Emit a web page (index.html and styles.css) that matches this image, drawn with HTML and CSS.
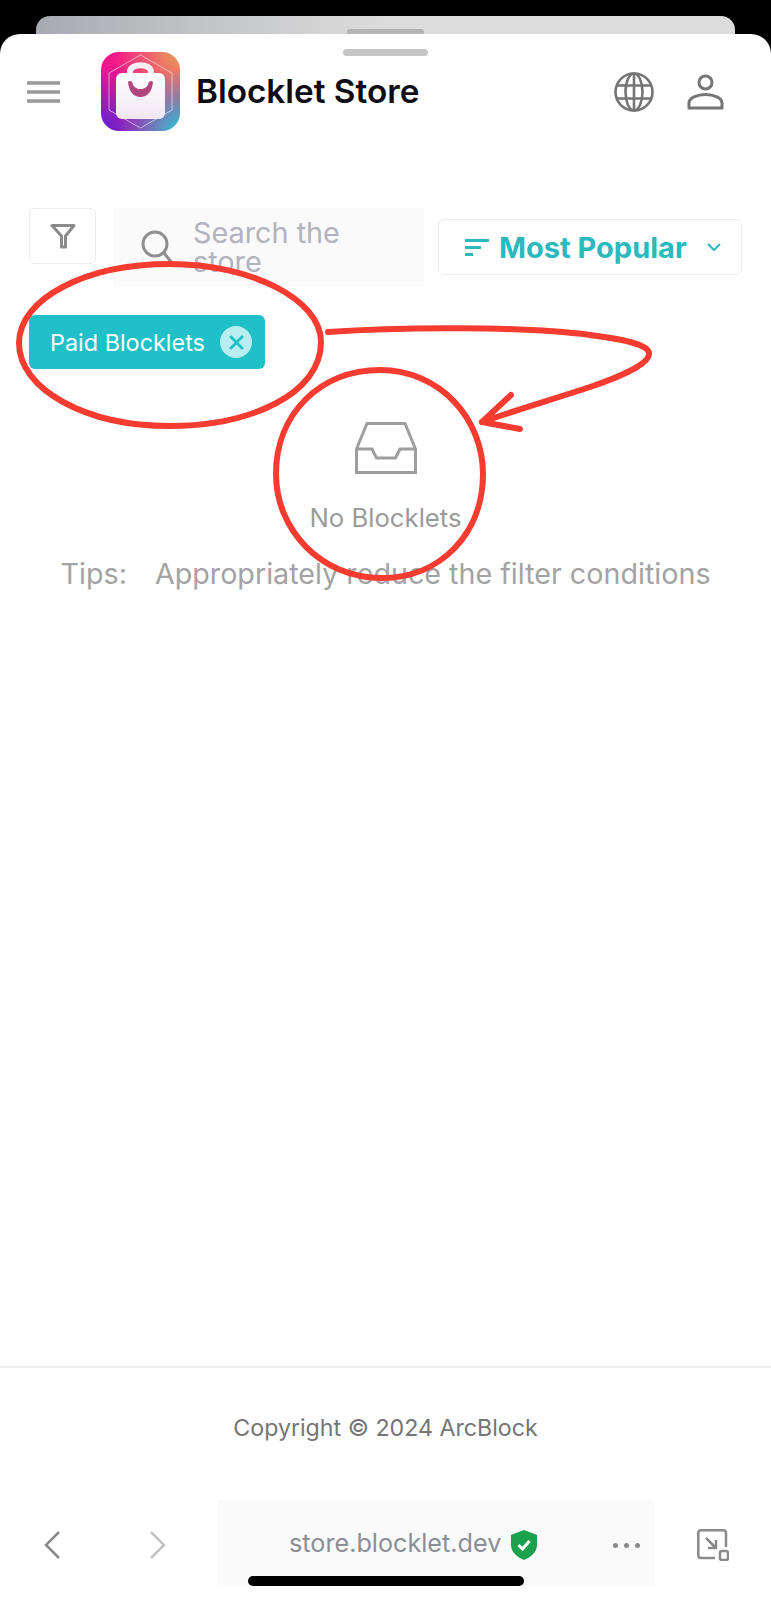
FILE: index.html
```html
<!DOCTYPE html>
<html lang="en">
<head>
  <meta charset="UTF-8">
  <title>Blocklet Store</title>
  <link rel="stylesheet" href="styles.css">
</head>
<body>
  <div class="top-strip">
    <div class="back-sheet"><span class="back-grabber"></span></div>
  </div>

  <div class="sheet">
    <span class="grabber"></span>

    <header class="header">
      <svg class="hamburger" viewBox="0 0 33 22">
        <path d="M0 2H33M0 11H33M0 20H33" stroke="#999" stroke-width="3.5" fill="none"/>
      </svg>
      <div class="logo">
        <svg viewBox="0 0 79 79">
          <defs>
            <linearGradient id="bagFill" x1="0" y1="0" x2="0" y2="1">
              <stop offset="0" stop-color="#fff"/>
              <stop offset="1" stop-color="#f1e6f3"/>
            </linearGradient>
          </defs>
          <path d="M39.5 3 71 21V58L39.5 76 8 58V21Z" fill="none" stroke="#fff" stroke-opacity=".55" stroke-width="1"/>
          <path d="M29 24V20C29 11 50 11 50 20V24" fill="none" stroke="#f6eef5" stroke-width="6"/>
          <rect x="15" y="21" width="49" height="46" rx="6" fill="url(#bagFill)"/>
          <path d="M27 30C28 28 31 29 31.5 31 33 39 46 39 47.5 31 48 29 51 28 52 30 51 40 46 45 39.5 45S28 40 27 30Z" fill="#b0487f"/>
        </svg>
      </div>
      <h1 class="title">Blocklet Store</h1>
      <div class="header-actions">
        <svg class="globe" viewBox="0 0 40 40" fill="none" stroke="#757575" stroke-width="2.6">
          <circle cx="20" cy="20" r="18.5"/>
          <ellipse cx="20" cy="20" rx="8.5" ry="18.5"/>
          <path d="M3 13.5H37M3 26.5H37M20 1.5V38.5"/>
        </svg>
        <svg class="user" viewBox="0 0 37 36" fill="none" stroke="#757575" stroke-width="3">
          <circle cx="18.5" cy="8.5" r="6.5"/>
          <path d="M2 34V29C2 24 10 20.5 18.5 20.5S35 24 35 29V34Z" stroke-linejoin="round"/>
        </svg>
      </div>
    </header>

    <div class="toolbar">
      <button class="filter-btn">
        <svg viewBox="0 0 26 26" width="26" height="26" fill="none" stroke="#8a8a8a" stroke-width="3" stroke-linejoin="round">
          <path d="M2 2.5H24L15.5 13V24H11.5V13Z"/>
        </svg>
      </button>
      <div class="search">
        <svg class="search-icon" viewBox="0 0 32 34" fill="none" stroke="#8f8f8f" stroke-width="3">
          <circle cx="14" cy="14" r="12"/>
          <path d="M23 23 31 33"/>
        </svg>
        <div class="search-text">Search the store</div>
      </div>
      <button class="sort-btn">
        <svg class="sort-icon" viewBox="0 0 24 17" fill="none" stroke="#2ab9bd" stroke-width="3">
          <path d="M0 1.5H24M0 8.5H16M0 15.5H8"/>
        </svg>
        <span class="sort-label">Most Popular</span>
        <svg class="chevron" viewBox="0 0 14 8" fill="none" stroke="#2ab9bd" stroke-width="2">
          <path d="M1 1 7 7 13 1"/>
        </svg>
      </button>
    </div>

    <div class="chips">
      <div class="chip">
        <span>Paid Blocklets</span>
        <span class="chip-close">
          <svg viewBox="0 0 14 14" width="15" height="15" fill="none" stroke="#1fc0c7" stroke-width="2.6">
            <path d="M1 1 13 13M13 1 1 13"/>
          </svg>
        </span>
      </div>
    </div>

    <div class="empty">
      <svg class="inbox" viewBox="0 0 62 52" fill="none" stroke="#9e9e9e" stroke-width="3">
        <path d="M1.5 27 12 1.5H50L60.5 27V50.5H1.5Z"/>
        <path d="M1.5 27H17L21.5 36H40.5L45 27H60.5"/>
      </svg>
      <div class="empty-title">No Blocklets</div>
      <div class="tips"><span>Tips:</span><span>Appropriately reduce the filter conditions</span></div>
    </div>

    <footer class="footer">Copyright © 2024 ArcBlock</footer>

    <nav class="browser-bar">
      <svg class="nav-arrow" viewBox="0 0 16 28" fill="none" stroke="#8a8a8a" stroke-width="2.5">
        <path d="M15 1 2 14 15 27"/>
      </svg>
      <svg class="nav-arrow forward" viewBox="0 0 16 28" fill="none" stroke="#c4c4c4" stroke-width="2.5">
        <path d="M1 1 14 14 1 27"/>
      </svg>
      <div class="url-box">
        <span class="url">store.blocklet.dev</span>
        <svg class="shield" viewBox="0 0 26 30">
          <path d="M13 0 26 5V15C26 22 20 27 13 30 6 27 0 22 0 15V5Z" fill="#1ba04b"/>
          <path d="M7.5 15 11.5 19 18.5 11" fill="none" stroke="#fff" stroke-width="3"/>
        </svg>
        <span class="dots"><i></i><i></i><i></i></span>
      </div>
      <svg class="exit-icon" viewBox="0 0 32 32" fill="none" stroke="#8a8a8a" stroke-width="2.5">
        <path d="M18 29H4C2 29 1.3 28 1.3 26V4C1.3 2 2 1.3 4 1.3H26C28 1.3 29 2 29 4V18"/>
        <path d="M9 9 19 19M19 11V19H11"/>
        <rect x="23" y="22" width="8" height="9" rx="2"/>
      </svg>
    </nav>

    <span class="home-indicator"></span>

    <!-- red pen notes drawn over the screenshot -->
    <svg class="notes" viewBox="0 0 771 1566" fill="none" stroke="#f63c30" stroke-width="6" stroke-linecap="round" stroke-linejoin="round">
      <path d="M321 308C321 360 250 392 170 392 85 392 19 355 19 309 19 265 85 230 170 230 250 230 321 265 321 308Z"/>
      <path d="M328 298C400 293 520 292 590 301 630 306 650 312 649 320 649 330 620 343 590 353S510 378 482 388"/>
      <path d="M511 361 482 388 520 395"/>
      <path d="M380 336C440 336 483 385 483 440 483 500 440 544 382 544 320 544 276 495 276 440 276 380 320 336 380 336Z"/>
    </svg>
  </div>
</body>
</html>
```

FILE: styles.css
```css
* {
  box-sizing: border-box;
}

html, body {
  margin: 0;
  height: 1600px;
}

body {
  background-color: #000;
  font-family: Inter, "Noto Sans", sans-serif;
  display: flex;
  flex-direction: column;
  overflow: hidden;
}

.top-strip {
  height: 34px;
  padding: 16px 36px 0;
  flex-shrink: 0;
}

.back-sheet {
  height: 18px;
  border-radius: 14px 14px 0 0;
  background: linear-gradient(90deg, #a7abb1 0%, #c4c5c7 25%, #dcdcdc 50%, #dcdcdc 100%);
  display: flex;
  justify-content: center;
  padding-top: 13px;
}

.back-grabber {
  width: 77px;
  height: 5px;
  background-color: #b5b5b5;
  border-radius: 3px 3px 0 0;
}

.sheet {
  position: relative;
  flex: 1;
  background-color: #fff;
  border-radius: 20px 20px 0 0;
  display: flex;
  flex-direction: column;
}

.grabber {
  position: absolute;
  top: 15px;
  left: 343px;
  width: 85px;
  height: 7px;
  background-color: #c6c6c6;
  border-radius: 4px;
}

.header {
  display: flex;
  align-items: center;
  height: 79px;
  margin-top: 18px;
  padding: 0 47px 0 27px;
}

.hamburger {
  width: 33px;
  height: 22px;
  margin-right: 41px;
}

.logo {
  width: 79px;
  height: 79px;
  border-radius: 18px;
  overflow: hidden;
  background:
    radial-gradient(circle at 100% 100%, #1fc8d8 0, rgba(31, 200, 216, 0) 55%),
    radial-gradient(circle at 100% 0, #e8a255 0, rgba(232, 162, 85, 0) 60%),
    radial-gradient(circle at 0 100%, #5a22d6 0, rgba(90, 34, 214, 0) 60%),
    #f3178a;
}

.logo svg {
  display: block;
  width: 79px;
  height: 79px;
}

.title {
  margin: 0 0 2px 16px;
  font-size: 33.3px;
  font-weight: 600;
  color: #0c0c14;
}

.header-actions {
  margin-left: auto;
  display: flex;
  align-items: center;
  gap: 33px;
}

.globe {
  width: 40px;
  height: 40px;
}

.user {
  width: 37px;
  height: 36px;
}

.toolbar {
  display: flex;
  align-items: flex-start;
  margin-top: 77px;
  padding: 0 29px;
}

.filter-btn {
  width: 67px;
  height: 56px;
  background-color: #fff;
  border: 1px solid #ececec;
  border-radius: 6px;
  padding: 0;
  display: flex;
  align-items: center;
  justify-content: center;
}

.search {
  width: 311px;
  height: 78px;
  margin-left: 17px;
  padding-left: 28px;
  background-color: #fafafa;
  display: flex;
  align-items: center;
}

.search-icon {
  width: 32px;
  height: 34px;
  flex-shrink: 0;
}

.search-text {
  width: 190px;
  margin-left: 20px;
  font-size: 28.8px;
  line-height: 29px;
  color: #b3b3bd;
}

.sort-btn {
  width: 304px;
  height: 56px;
  margin: 11px 0 0 14px;
  background-color: #fff;
  border: 1px solid #ececec;
  border-radius: 6px;
  padding: 0 20px 0 26px;
  display: flex;
  align-items: center;
  font-family: inherit;
}

.sort-icon {
  width: 24px;
  height: 17px;
}

.sort-label {
  margin-left: 10px;
  font-size: 29px;
  font-weight: 700;
  color: #2ab9bd;
}

.chevron {
  width: 14px;
  height: 8px;
  margin-left: auto;
}

.chips {
  display: flex;
  margin-top: 29px;
  padding-left: 29px;
}

.chip {
  width: 236px;
  height: 54px;
  padding: 0 13px 0 21px;
  background-color: #1fc0c7;
  border-radius: 6px;
  display: flex;
  align-items: center;
  justify-content: space-between;
  font-size: 23.4px;
  color: #fff;
}

.chip-close {
  width: 32px;
  height: 32px;
  border-radius: 50%;
  background-color: #b9eef0;
  display: flex;
  align-items: center;
  justify-content: center;
}

.empty {
  display: flex;
  flex-direction: column;
  align-items: center;
  margin-top: 53px;
}

.inbox {
  width: 62px;
  height: 52px;
}

.empty-title {
  margin-top: 28px;
  font-size: 25.7px;
  color: #9b9b9b;
}

.tips {
  margin-top: 23px;
  display: flex;
  gap: 28px;
  font-size: 28.7px;
  color: #a3a3a3;
}

.footer {
  margin-top: auto;
  height: 134px;
  border-top: 2px solid #eee;
  padding-top: 44px;
  text-align: center;
  font-size: 23.2px;
  line-height: 32px;
  color: #757575;
}

.browser-bar {
  height: 85px;
  margin-bottom: 15px;
  padding: 0 42px 0 44px;
  display: flex;
  align-items: center;
}

.nav-arrow {
  width: 16px;
  height: 28px;
  margin-top: 5px;
}

.nav-arrow.forward {
  margin-left: 90px;
}

.url-box {
  width: 437px;
  height: 85px;
  margin-left: 52px;
  padding: 5px 15px 0 71px;
  background-color: #fafafa;
  display: flex;
  align-items: center;
}

.url {
  margin-bottom: 4px;
  font-size: 25.2px;
  color: #8b8e94;
}

.shield {
  width: 26px;
  height: 30px;
  margin-left: 10px;
}

.dots {
  margin-left: auto;
  display: flex;
  gap: 6px;
}

.dots i {
  width: 5px;
  height: 5px;
  border-radius: 50%;
  background-color: #8a8a8a;
}

.exit-icon {
  width: 32px;
  height: 32px;
  margin: 5px 0 0 auto;
}

.home-indicator {
  position: absolute;
  left: 248px;
  top: 1542px;
  width: 276px;
  height: 10px;
  border-radius: 5px;
  background-color: #000;
}

.notes {
  position: absolute;
  left: 0;
  top: 0;
  width: 771px;
  height: 1566px;
  pointer-events: none;
}
```
